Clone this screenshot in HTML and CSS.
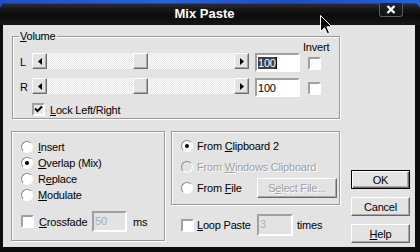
FILE: index.html
```html
<!DOCTYPE html>
<html lang="en">
<head>
  <meta charset="UTF-8">
  <title>Mix Paste</title>
  <link rel="stylesheet" href="styles.css">
</head>
<body>

  <div class="window">
    <div class="titlebar">
      <span class="title">Mix Paste</span>
      <span class="close">
        <svg width="10" height="9" viewBox="0 0 10 9"><path d="M1.5 1 L8.5 8 M8.5 1 L1.5 8" stroke="#fff" stroke-width="2.4" fill="none"/></svg>
      </span>
    </div>

    <div class="client">
      <div class="main">
        <fieldset class="volume">
          <legend><u>V</u>olume</legend>
          <div class="vol-head">Invert</div>

          <div class="vol-row">
            <span class="ch">L</span>
            <div class="slider">
              <span class="raised arrow"><svg width="4" height="7" viewBox="0 0 4 7"><path d="M4 0 L0 3.5 L4 7 Z"/></svg></span>
              <div class="track"><span class="raised thumb" style="margin-left: 86px"></span></div>
              <span class="raised arrow"><svg width="4" height="7" viewBox="0 0 4 7"><path d="M0 0 L4 3.5 L0 7 Z"/></svg></span>
            </div>
            <div class="num"><span class="sel">100</span><span class="caret"></span></div>
            <span class="cb"></span>
          </div>

          <div class="vol-row">
            <span class="ch">R</span>
            <div class="slider">
              <span class="raised arrow"><svg width="4" height="7" viewBox="0 0 4 7"><path d="M4 0 L0 3.5 L4 7 Z"/></svg></span>
              <div class="track"><span class="raised thumb" style="margin-left: 86px"></span></div>
              <span class="raised arrow"><svg width="4" height="7" viewBox="0 0 4 7"><path d="M0 0 L4 3.5 L0 7 Z"/></svg></span>
            </div>
            <div class="num">100</div>
            <span class="cb"></span>
          </div>

          <div class="lock">
            <span class="cb checked">
              <svg width="9" height="9" viewBox="0 0 9 9"><path d="M1 3.5 L3.5 6 L8 1.5" stroke="#000" stroke-width="2" fill="none"/></svg>
            </span>
            <span><u>L</u>ock Left/Right</span>
          </div>
        </fieldset>

        <div class="lower">
          <div class="group mode">
            <div class="radio-row"><span class="radio"></span><span><u>I</u>nsert</span></div>
            <div class="radio-row"><span class="radio on"></span><span><u>O</u>verlap (Mix)</span></div>
            <div class="radio-row"><span class="radio"></span><span>R<u>e</u>place</span></div>
            <div class="radio-row"><span class="radio"></span><span><u>M</u>odulate</span></div>
            <div class="cross-row">
              <span class="cb"></span>
              <span class="cross-label"><u>C</u>rossfade</span>
              <div class="num off cross-num">50</div>
              <span class="unit">ms</span>
            </div>
          </div>

          <div class="source-col">
            <div class="group source">
              <div class="src-row"><span class="radio on"></span><span>From <u>C</u>lipboard 2</span></div>
              <div class="src-row"><span class="radio disabled"></span><span class="dim">From <u>W</u>indows Clipboard</span></div>
              <div class="src-row">
                <span class="radio"></span><span class="file-label">From <u>F</u>ile</span>
                <button class="btn file-btn"><span class="dim">S<u>e</u>lect File...</span></button>
              </div>
            </div>
            <div class="loop-row">
              <span class="cb"></span>
              <span class="loop-label"><u>L</u>oop Paste</span>
              <div class="num off loop-num">3</div>
              <span class="times">times</span>
            </div>
          </div>
        </div>
      </div>

      <div class="buttons">
        <button class="btn default">OK</button>
        <button class="btn">Cancel</button>
        <button class="btn"><span><u>H</u>elp</span></button>
      </div>
    </div>
  </div>

  <svg class="cursor" width="13" height="20" viewBox="0 0 13 20">
    <path d="M0.5 0.5 L0.5 16.5 L4.5 12.8 L7.3 18.8 L9.6 17.8 L6.8 11.8 L11.8 11.8 Z" fill="#000" stroke="#fff" stroke-width="1"/>
  </svg>

</body>
</html>
```

FILE: styles.css
```css
body {
  margin: 0;
  width: 420px;
  height: 252px;
  overflow: hidden;
  position: relative;
  background: linear-gradient(90deg, #1f50c8, #2a62dc 40%, #1d4ec4 70%, #2860d8);
  font-family: 'Liberation Sans', Arial, sans-serif;
  font-size: 11px;
  letter-spacing: -0.2px;
  color: #000;
}

.window {
  margin-top: 3px;
  height: 249px;
  background: #0c0c0c;
  border-radius: 7px 7px 0 0;
  display: flex;
  flex-direction: column;
}

.titlebar {
  height: 22px;
  flex-shrink: 0;
  border-radius: 7px 7px 0 0;
  background: linear-gradient(#5a5a5a 0, #2c2c2c 1px, #181818 6px, #0b0b0b 12px, #161616 22px);
  display: flex;
  justify-content: center;
  position: relative;
}

.title {
  color: #fff;
  font-weight: bold;
  font-size: 13px;
  letter-spacing: 0;
  line-height: 22px;
  padding-right: 11px;
}

.close {
  position: absolute;
  top: 0;
  right: 17px;
  width: 22px;
  height: 13px;
  border: 1px solid #5c5c5c;
  border-top: none;
  border-radius: 0 0 3px 3px;
  background: linear-gradient(#262626, #0e0e0e);
  display: flex;
  align-items: center;
  justify-content: center;
}

.client {
  flex: 1;
  margin: 0 5px 5px 3px;
  padding: 5px 0 0 8px;
  background: #e3e3e3;
  display: flex;
}

.main {
  width: 329px;
}

/* group boxes */
.volume, .group {
  border: 1px solid #999;
  box-shadow: 1px 1px 0 #fff, inset 1px 1px 0 #fff;
  box-sizing: border-box;
}

.volume {
  margin: 0 0 0 1px;
  padding: 0 0 2px 7px;
  width: 328px;
  min-width: 0;
}

legend {
  margin-left: -1px;
  padding: 0 1px;
  line-height: 13px;
  background: #e3e3e3;
}

.vol-head {
  line-height: 12px;
  margin-top: -2px;
  padding-left: 283px;
}

.vol-row {
  display: flex;
  align-items: flex-start;
  height: 20px;
  margin-bottom: 5px;
}

.ch {
  width: 12px;
  line-height: 13px;
  margin-top: 3px;
}

.slider {
  width: 217px;
  height: 16px;
  display: flex;
}

.raised {
  box-sizing: border-box;
  background: #e3e3e3;
  border: 1px solid;
  border-color: #fff #6e6e6e #6e6e6e #fff;
  box-shadow: inset -1px -1px 0 #a8a8a8;
}

.arrow {
  width: 15px;
  height: 16px;
  display: flex;
  align-items: center;
  justify-content: center;
}

.track {
  flex: 1;
  display: flex;
  background: repeating-conic-gradient(#fff 0 25%, #e3e3e3 0 50%) 0 0 / 2px 2px;
}

.thumb {
  width: 15px;
  height: 16px;
}

.num {
  margin-left: 6px;
  width: 45px;
  height: 19px;
  box-sizing: border-box;
  border: 2px solid;
  border-color: #a0a0a0 #fff #fff #a0a0a0;
  background: #fff;
  padding: 2px 1px;
  line-height: 12px;
  display: flex;
  align-items: flex-start;
}

.sel {
  background: #404048;
  color: #fff;
}

.caret {
  width: 1px;
  height: 12px;
  background: #000;
}

.cb {
  width: 13px;
  height: 13px;
  flex-shrink: 0;
  box-sizing: border-box;
  border: 2px solid;
  border-color: #a0a0a0 #fff #fff #a0a0a0;
  background: #fff;
  margin: 4px 0 0 8px;
  display: flex;
  align-items: center;
  justify-content: center;
}

.cb.checked {
  background: #e8e8e8;
}

.lock {
  display: flex;
  align-items: center;
  height: 13px;
  margin: 1px 0 0 12px;
}

.lock .cb {
  margin: 0 5px 0 0;
}

/* lower part */
.lower {
  display: flex;
  gap: 6px;
  margin-top: 12px;
}

.mode {
  width: 154px;
  height: 110px;
  padding: 7px 0 0 9px;
}

.radio-row {
  display: flex;
  align-items: center;
  gap: 5px;
  height: 16px;
}

.radio {
  width: 12px;
  height: 12px;
  flex-shrink: 0;
  box-sizing: border-box;
  border-radius: 50%;
  border: 1px solid;
  border-color: #8a8a8a #fff #fff #8a8a8a;
  background: #fff;
  display: flex;
  align-items: center;
  justify-content: center;
}

.radio.on::after {
  content: "";
  width: 4px;
  height: 4px;
  border-radius: 50%;
  background: #000;
}

.radio.disabled {
  background: #e3e3e3;
}

.dim {
  color: #a0a0a0;
  text-shadow: 1px 1px 0 #fff;
}

.cross-row {
  display: flex;
  align-items: center;
  height: 21px;
  margin-top: 8px;
}

.cross-row .cb, .loop-row .cb {
  margin: 0 5px 0 0;
}

.cross-label {
  width: 53px;
}

.num.off {
  margin-left: 0;
  background: #e3e3e3;
  color: #9fb2c8;
}

.cross-num {
  width: 35px;
  height: 21px;
}

.unit {
  margin-left: 6px;
}

.source-col {
  width: 169px;
}

.source {
  height: 74px;
  padding: 3px 0 0 9px;
}

.src-row {
  display: flex;
  align-items: center;
  gap: 4px;
  height: 21px;
}

.file-label {
  width: 56px;
}

.loop-row {
  display: flex;
  align-items: center;
  height: 22px;
  margin-top: 9px;
  padding-left: 10px;
}

.loop-row .cb {
  margin-right: 3px;
}

.loop-label {
  width: 60px;
}

.loop-num {
  width: 36px;
  height: 22px;
}

.times {
  margin-left: 4px;
}

/* push buttons */
.btn {
  width: 59px;
  height: 19px;
  box-sizing: border-box;
  padding: 0;
  background: #e3e3e3;
  border: 1px solid;
  border-color: #fff #6a6a6a #6a6a6a #fff;
  box-shadow: inset -1px -1px 0 #a8a8a8;
  font: inherit;
  letter-spacing: inherit;
  color: #000;
}

.btn.default {
  border-color: #000;
  box-shadow: inset 1px 1px 0 #fff, inset -1px -1px 0 #6a6a6a, inset -2px -2px 0 #a8a8a8;
}

.file-btn {
  width: 80px;
  height: 20px;
  margin-left: 0;
}

.buttons {
  display: flex;
  flex-direction: column;
  gap: 8px;
  margin-left: 11px;
  padding-top: 140px;
}

.cursor {
  position: absolute;
  left: 320px;
  top: 15px;
}
```
